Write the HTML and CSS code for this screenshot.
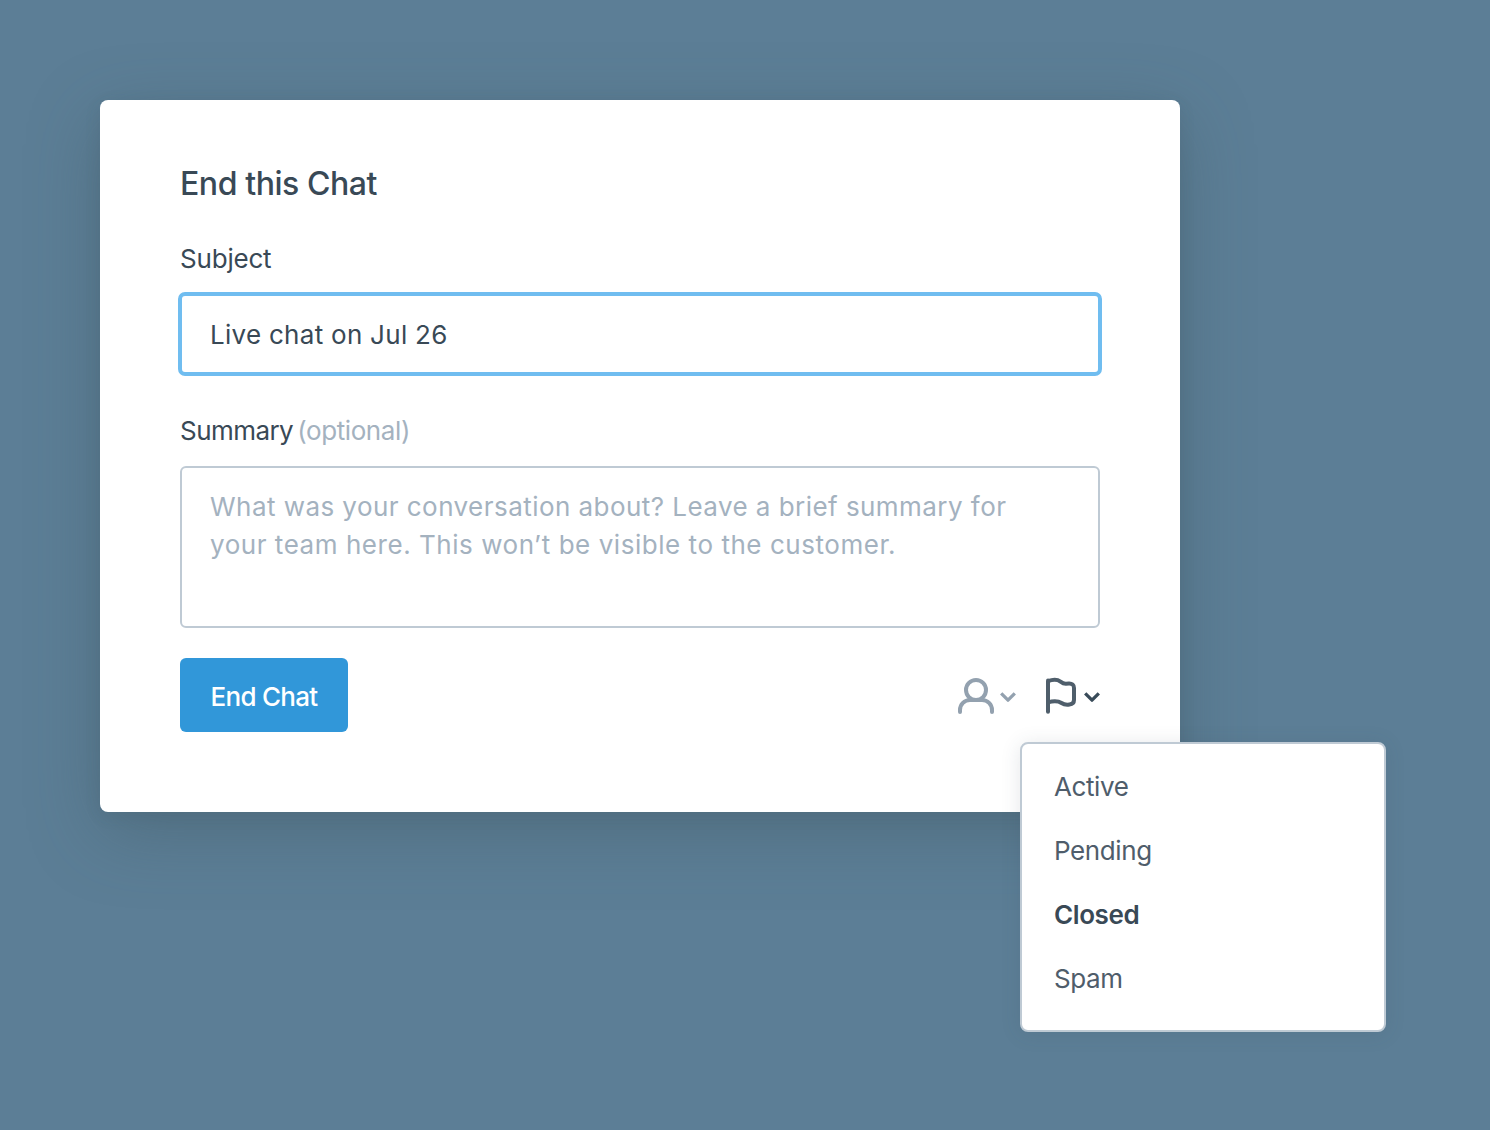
FILE: index.html
```html
<!DOCTYPE html>
<html lang="en">
<head>
<meta charset="utf-8">
<title>End this Chat</title>
<link rel="stylesheet" href="styles.css">
</head>
<body>
<main class="dialog">
  <h1 class="title">End this Chat</h1>
  <div class="label label-subject">Subject</div>
  <div class="input">Live chat on Jul 26</div>
  <div class="label label-summary">Summary<span class="optional">(optional)</span></div>
  <div class="textarea">What was your conversation about? Leave a brief summary for<br><span class="second-line">your team here. This won’t be visible to the customer.</span></div>
  <div class="footer">
    <button class="button">End Chat</button>
    <div class="tools">
      <svg class="assign" width="60" height="40" viewBox="0 0 60 40" fill="none" stroke="#93a1af" stroke-width="4" stroke-linejoin="round"><circle cx="20" cy="14" r="10"/><path stroke-linecap="round" d="M4 36v-2a10 10 0 0 1 10-10h12a10 10 0 0 1 10 10v2"/><path stroke-width="3.3" d="M45.2 17.4l6.8 6.800 6.800-6.800"/></svg>
      <svg class="status" width="60" height="40" viewBox="0 0 60 40" fill="none" stroke="#4f5e6b" stroke-width="4" stroke-linejoin="round"><path stroke-linecap="round" d="M8 4.5v31.3"/><path d="M8 5.2c4-1.6 9-2.2 12.500.4 2.200 1.700 3.200 2.200 5.500 2.100l3-.2c3-.1 5 1.500 5 4.500v12c0 3-1.600 4.200-4.500 4.500-3.500.5-5.500.2-8-1.500-4-2.700-8-2.300-13.500-.7"/><path stroke="#394b59" stroke-width="3.300" d="M45.2 17.4l6.800 6.800 6.800-6.800"/></svg>
      <div class="menu">
        <div class="item">Active</div>
        <div class="item">Pending</div>
        <div class="item selected">Closed</div>
        <div class="item">Spam</div>
      </div>
    </div>
  </div>
</main>
</body>
</html>
```
FILE: styles.css
```css
* { box-sizing: border-box; }
body { margin: 0; min-height: 1130px; padding: 100px; background: #5c7e96; color: #394956; font: 26px/38px Inter, sans-serif; }
.dialog { width: 1080px; height: 712px; padding: 61px 80px 60px; background: #fff; border-radius: 8px; box-shadow: 0 4px 16px rgba(57,73,86,.12), 0 20px 70px rgba(57,80,86,.35); }
.title { margin: 0 0 37px; font-size: 32px; line-height: 46px; font-weight: 500; letter-spacing: -.43px; }
.label { height: 38px; white-space: nowrap; margin-top: -4px; }
.label-subject { letter-spacing: -.2px; }
.input { height: 84px; margin: 14px -2px 0; padding: 20px 28px; border: 4px solid #70bdf0; border-radius: 7px; letter-spacing: .28px; }
.label-summary { margin-top: 36px; letter-spacing: -.55px; }
.optional { margin-left: 4px; color: #a4b2bf; letter-spacing: -.4px; }
.textarea { height: 162px; margin-top: 16px; padding: 20px 28px; border: 2px solid #bfcad4; border-radius: 6px; color: #a4b2bf; letter-spacing: .45px; white-space: nowrap; }
.second-line { letter-spacing: .54px; }
.footer { display: flex; justify-content: space-between; margin-top: 30px; }
.button { width: 168px; height: 74px; border: 0; border-radius: 6px; background: #3197d9; color: #fff; font: 500 26px/38px Inter, sans-serif; letter-spacing: -.7px; padding: 4px 0 0; }
.tools { position: relative; display: flex; gap: 24px; padding-top: 18px; }
.menu { position: absolute; top: 84px; left: 64px; width: 366px; height: 290px; padding: 11px 32px; border: 2px solid #bfcad4; border-radius: 8px; background: #fff; box-shadow: 0 2px 20px rgba(57,73,86,.13); color: #4f5d6b; letter-spacing: -.4px; }
.item { height: 64px; line-height: 64px; }
.selected { color: #394956; font-weight: 600; }
```
